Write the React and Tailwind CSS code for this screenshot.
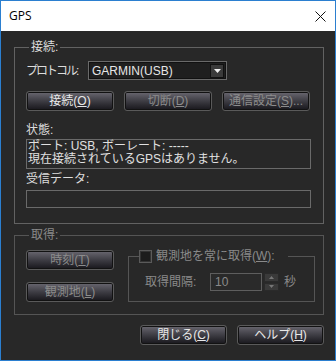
import React from 'react';

const ui = "font-['Liberation_Sans','Noto_Sans_CJK_JP',sans-serif] text-[12px] leading-[14px]";

function Btn({ children, disabled, className = '' }) {
  return (
    <div
      className={`flex items-center justify-center h-[20px] rounded-[3px] border border-[#5a5a5a] bg-gradient-to-b from-[#6a6871] via-[#3e3d44] to-[#18171c] shadow-[inset_0_0_0_1px_#121212] ${disabled ? 'text-[#8c8c8c]' : 'text-[#e8e8e8]'} ${className}`}
    >
      {children}
    </div>
  );
}

function Mn({ k }) {
  return <span className="underline underline-offset-1">{k}</span>;
}

export default function App() {
  return (
    <div className={`w-[336px] h-[361px] flex flex-col border border-[#2b7fd0] bg-[#282828] ${ui}`}>
      {/* title bar */}
      <div className="h-[30px] bg-white flex items-center justify-between pl-[8px] pr-[9px] shrink-0">
        <span className="font-['Open_Sans',sans-serif] text-[12px] text-black">GPS</span>
        <svg width="11" height="11" viewBox="0 0 11 11">
          <path d="M0.5 0.5L10.5 10.5M10.5 0.5L0.5 10.5" stroke="#111" strokeWidth="1" />
        </svg>
      </div>

      <div className="flex flex-col pl-[13px] pr-[11px]">
        {/* 接続 */}
        <fieldset className="mt-[9px] border border-[#626262] pl-[11px] pr-[12px] pb-[15px]">
          <legend className="ml-[3px] px-[2px] text-[#dcdcdc]">接続:</legend>
          <div className="flex items-center mt-[7px] h-[19px]">
            <span className="w-[62px] whitespace-nowrap tracking-[-2px] text-[#dcdcdc]">プロトコル:</span>
            <div className="w-[139px] h-[19px] flex items-center justify-between border border-[#6a6a6a] bg-[#1f1f1f] shadow-[inset_0_0_0_1px_#111] pl-[3px] pr-[2px]">
              <span className="text-[#e6e6e6]">GARMIN(USB)</span>
              <div className="w-[14px] h-[14px] flex items-center justify-center bg-[#3a3a3a] border border-[#111]">
                <svg width="7" height="4" viewBox="0 0 7 4">
                  <path d="M0 0H7L3.5 4Z" fill="#f0f0f0" />
                </svg>
              </div>
            </div>
          </div>
          <div className="flex gap-[10px] mt-[11px]">
            <Btn className="w-[88px]">接続(<Mn k="O" />)</Btn>
            <Btn disabled className="w-[88px]">切断(<Mn k="D" />)</Btn>
            <Btn disabled className="w-[88px]">通信設定(<Mn k="S" />)...</Btn>
          </div>
          <div className="mt-[12px] text-[#dcdcdc]">状態:</div>
          <div className="mt-[2px] h-[30px] border border-[#6a6a6a] px-[1px] text-[#e0e0e0] leading-[13px]">
            <div>ポート: USB, ボーレート: -----</div>
            <div>現在接続されているGPSはありません。</div>
          </div>
          <div className="mt-[3px] text-[#dcdcdc]">受信データ:</div>
          <div className="mt-[4px] h-[18px] border border-[#6a6a6a]" />
        </fieldset>

        {/* 取得 */}
        <fieldset className="mt-[4px] border border-[#555] pl-[11px] pr-[8px] pb-[12px]">
          <legend className="ml-[3px] px-[2px] text-[#8a8a8a]">取得:</legend>
          <div className="flex gap-[14px]">
            <div className="flex flex-col gap-[12px] pt-[8px]">
              <Btn disabled className="w-[88px]">時刻(<Mn k="T" />)</Btn>
              <Btn disabled className="w-[88px]">観測地(<Mn k="L" />)</Btn>
            </div>
            <fieldset className="mt-[7px] w-[187px] border border-[#555] pb-[10px]">
              <legend className="ml-[10px] pr-[13px] flex items-center gap-[4px] text-[#8a8a8a]">
                <span className="w-[13px] h-[13px] border border-[#5a5a5a] bg-[#1c1c1c] shadow-[inset_0_0_0_1px_#333]" />
                <span>観測地を常に取得(<Mn k="W" />):</span>
              </legend>
              <div className="flex items-center mt-[10px] pl-[16px]">
                <span className="w-[65px] text-[#8a8a8a]">取得間隔:</span>
                <div className="w-[52px] h-[18px] border border-[#5e5e5e] bg-[#2a2a2a] pl-[4px] flex items-center text-[#8a8a8a]">10</div>
                <div className="ml-[2px] w-[15px] h-[18px] flex flex-col gap-[1px]">
                  <div className="flex-1 flex items-center justify-center bg-[#3a3a3a] border border-[#2a2a2a]">
                    <svg width="5" height="3" viewBox="0 0 5 3"><path d="M2.5 0L5 3H0Z" fill="#777" /></svg>
                  </div>
                  <div className="flex-1 flex items-center justify-center bg-[#3a3a3a] border border-[#2a2a2a]">
                    <svg width="5" height="3" viewBox="0 0 5 3"><path d="M0 0H5L2.5 3Z" fill="#777" /></svg>
                  </div>
                </div>
                <span className="ml-[5px] text-[#8a8a8a]">秒</span>
              </div>
            </fieldset>
          </div>
        </fieldset>

        {/* bottom buttons */}
        <div className="flex justify-end gap-[10px] mt-[10px]">
          <Btn className="w-[87px]">閉じる(<Mn k="C" />)</Btn>
          <Btn className="w-[87px]">ヘルプ(<Mn k="H" />)</Btn>
        </div>
      </div>
    </div>
  );
}
